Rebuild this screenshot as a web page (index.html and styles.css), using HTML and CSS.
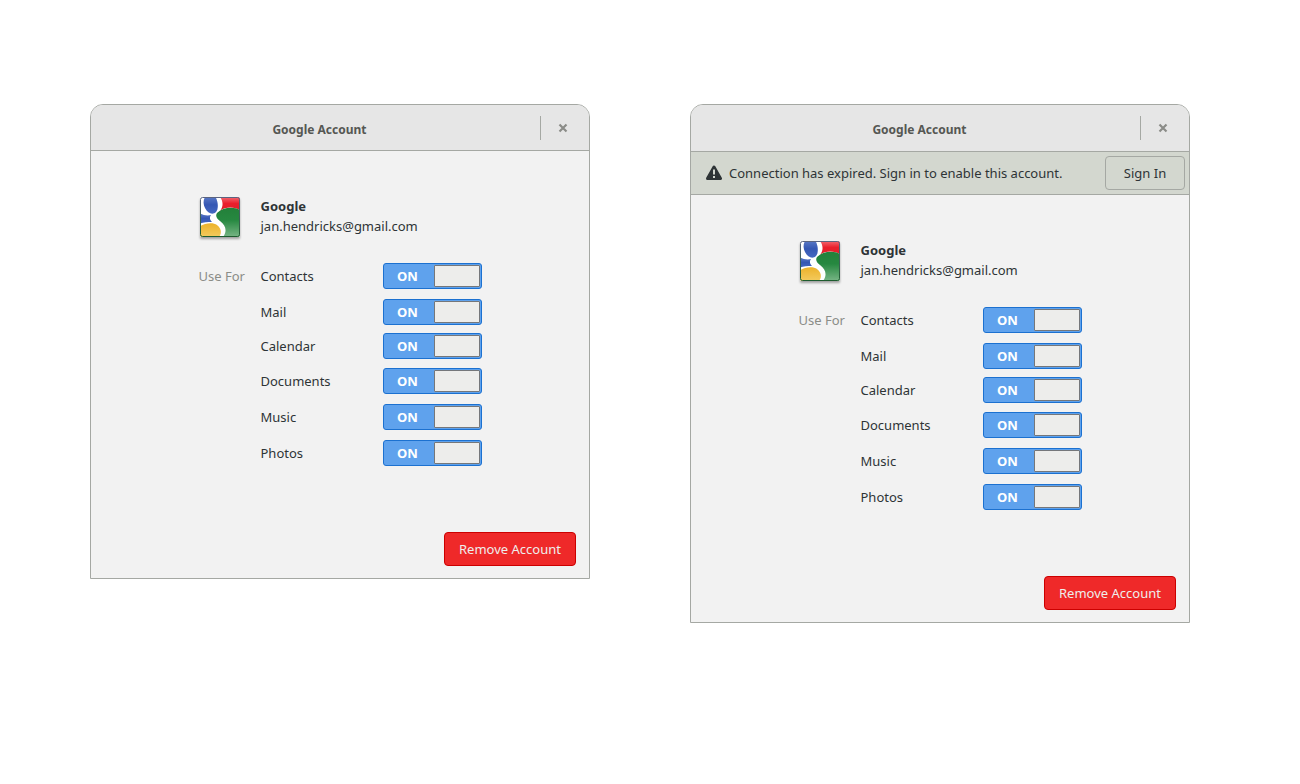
FILE: index.html
```html
<!DOCTYPE html>
<html lang="en">
<head>
<meta charset="utf-8">
<title>Google Account</title>
<link rel="stylesheet" href="styles.css">
</head>
<body>
<svg class="defs" aria-hidden="true">
  <defs>
    <linearGradient id="blue" x1="0" y1="0" x2="0" y2="1"><stop offset="0" stop-color="#5d7cc8"/><stop offset=".5" stop-color="#3557b3"/><stop offset="1" stop-color="#4569c2"/></linearGradient>
    <linearGradient id="red" x1="0" y1="0" x2="0" y2="1"><stop offset="0" stop-color="#f4737b"/><stop offset=".5" stop-color="#ea1f2c"/><stop offset="1" stop-color="#e0202b"/></linearGradient>
    <linearGradient id="green" x1="0" y1="0" x2="0" y2="1"><stop offset="0" stop-color="#23803a"/><stop offset=".4" stop-color="#268840"/><stop offset="1" stop-color="#7db88a"/></linearGradient>
    <linearGradient id="yellow" x1="0" y1="0" x2="0" y2="1"><stop offset="0" stop-color="#ecb22b"/><stop offset="1" stop-color="#f4cd62"/></linearGradient>
    <linearGradient id="edge" x1="0" y1="0" x2="0" y2="1"><stop offset="0" stop-color="#5b6480"/><stop offset="1" stop-color="#1e5c2f"/></linearGradient>
    <clipPath id="tile"><rect x="1" y="1" width="40" height="40" rx="2"/></clipPath>
  </defs>
  <symbol id="google" viewBox="0 0 42 42">
    <g clip-path="url(#tile)">
      <rect width="42" height="42" fill="#fff"/>
      <path d="M20 0H42V15C37 11 27 10 21 15C25 10 24 4 20 0Z" fill="url(#red)"/>
      <path d="M42 15C36 10 24 11 18 17C16 20 18 23 21 25C28 30 28 37 23 42H42Z" fill="url(#green)"/>
      <path d="M7 0H16C19 5 20 12 17 16C14 19 9 18 6 12C4 8 4 3 7 0Z" fill="url(#blue)"/>
      <path d="M0 17C4 19 8 20 12 19C10 22 11 24 13 26C8 26 4 26 0 28Z" fill="url(#blue)"/>
      <path d="M0 31C5 27 14 26 18 29C24 34 22 39 19 42H0Z" fill="url(#yellow)"/>
    </g>
    <rect x="1.500" y="1.500" width="39" height="39" rx="2" fill="none" stroke="url(#edge)"/>
  </symbol>
  <symbol id="close" viewBox="0 0 10 10"><path d="M1.500 1.500L8.500 8.500M8.500 1.500L1.500 8.500" stroke="#8b8c88" stroke-width="2.200" fill="none"/></symbol>
</svg>
<main class="boards">
  <section class="window" aria-labelledby="t1">
    <header class="titlebar"><h1 class="title" id="t1">Google Account</h1><button class="close" aria-label="Close"><svg><use href="#close"/></svg></button></header>
    <div class="content">
      <div class="details">
        <svg class="logo" role="img" aria-label="Google"><use href="#google"/></svg>
        <div class="identity"><strong>Google</strong><span>jan.hendricks@gmail.com</span></div>
      </div>
      <div class="services">
        <span class="caption">Use For</span>
        <label for="a1">Contacts</label><span class="switch"><input type="checkbox" id="a1" checked><span class="state">ON</span></span>
        <label for="a2">Mail</label><span class="switch"><input type="checkbox" id="a2" checked><span class="state">ON</span></span>
        <label for="a3">Calendar</label><span class="switch"><input type="checkbox" id="a3" checked><span class="state">ON</span></span>
        <label for="a4">Documents</label><span class="switch"><input type="checkbox" id="a4" checked><span class="state">ON</span></span>
        <label for="a5">Music</label><span class="switch"><input type="checkbox" id="a5" checked><span class="state">ON</span></span>
        <label for="a6">Photos</label><span class="switch"><input type="checkbox" id="a6" checked><span class="state">ON</span></span>
      </div>
      <button class="button remove">Remove Account</button>
    </div>
  </section>
  <section class="window" aria-labelledby="t2">
    <header class="titlebar"><h1 class="title" id="t2">Google Account</h1><button class="close" aria-label="Close"><svg><use href="#close"/></svg></button></header>
    <div class="infobar">
      <svg class="warning" viewBox="0 0 16 16" aria-hidden="true"><path d="M8 2L14.500 13.500H1.500Z" fill="#2e3436" stroke="#2e3436" stroke-width="3" stroke-linejoin="round"/><path d="M7 4.500H9V9.500H7ZM7 11H9V13H7Z" fill="#d3d7cf"/></svg>
      <p class="message">Connection has expired. Sign in to enable this account.</p>
      <button class="button signin">Sign In</button>
    </div>
    <div class="content">
      <div class="details">
        <svg class="logo" role="img" aria-label="Google"><use href="#google"/></svg>
        <div class="identity"><strong>Google</strong><span>jan.hendricks@gmail.com</span></div>
      </div>
      <div class="services">
        <span class="caption">Use For</span>
        <label for="b1">Contacts</label><span class="switch"><input type="checkbox" id="b1" checked><span class="state">ON</span></span>
        <label for="b2">Mail</label><span class="switch"><input type="checkbox" id="b2" checked><span class="state">ON</span></span>
        <label for="b3">Calendar</label><span class="switch"><input type="checkbox" id="b3" checked><span class="state">ON</span></span>
        <label for="b4">Documents</label><span class="switch"><input type="checkbox" id="b4" checked><span class="state">ON</span></span>
        <label for="b5">Music</label><span class="switch"><input type="checkbox" id="b5" checked><span class="state">ON</span></span>
        <label for="b6">Photos</label><span class="switch"><input type="checkbox" id="b6" checked><span class="state">ON</span></span>
      </div>
      <button class="button remove">Remove Account</button>
    </div>
  </section>
</main>
</body>
</html>
```
FILE: styles.css
```css
*, *::before { box-sizing: border-box; }
body {
  margin: 0;
  background: #fff;
  color: #2e3436;
  font: 13px/20px "Noto Sans", "Open Sans", sans-serif;
}
button { font: inherit; color: inherit; margin: 0; }
.defs { position: absolute; width: 0; height: 0; }
.boards {
  display: grid;
  grid-template-columns: 1fr 1fr;
  align-items: start;
  gap: 100px;
  padding: 104px 110px 104px 90px;
}
.window {
  border: 1px solid #a5a8a3;
  border-radius: 13px 13px 0 0;
  background: #f2f2f2;
  overflow: hidden;
}
.titlebar {
  display: flex;
  align-items: center;
  height: 46px;
  border-bottom: 1px solid #a5a8a3;
  background: #e6e6e6;
}
.title {
  flex: 1;
  margin: 0;
  padding: 4px 0 0 8px;
  color: #555753;
  font-size: 12px;
  line-height: 20px;
  font-weight: 700;
  text-align: center;
}
.close {
  display: grid;
  place-items: center;
  width: 49px;
  height: 24px;
  padding: 0 4px 0 0;
  border: 0;
  border-left: 1px solid #a5a8a3;
  background: none;
}
.close svg { width: 10px; height: 10px; }
.infobar {
  display: flex;
  align-items: center;
  height: 44px;
  padding: 0 4px 0 15px;
  border-top: 1px solid #a5a8a3;
  border-bottom: 1px solid #a5a8a3;
  background: #d3d7cf;
}
.titlebar:has(+ .infobar) { border-bottom-color: transparent; }
.warning { width: 16px; height: 16px; margin-right: 7px; }
.message { flex: 1; margin: 0; }
.button { height: 34px; border: 1px solid; border-radius: 4px; }
.signin { width: 80px; padding: 0; border-color: #a5a8a3; background: #d3d7cf; }
.content {
  display: flex;
  flex-direction: column;
  align-items: center;
  padding: 45px 13px 12px;
}
.details {
  display: grid;
  grid-template-columns: 62px 221px;
}
.logo { width: 42px; height: 42px; filter: drop-shadow(0 2px 1px #0005); }
.identity { display: flex; flex-direction: column; }
.services {
  display: grid;
  grid-template-columns: 62px 122px 99px;
  grid-template-rows: 36px 34px 35px 36px 36px 26px;
  margin-top: 25px;
}
.services label { grid-column: 2; line-height: 26px; }
.caption { color: #8b8d88; line-height: 26px; }
.switch { grid-column: 3; display: grid; height: 26px; }
.switch input {
  grid-area: 1 / 1;
  appearance: none;
  display: flex;
  justify-content: flex-end;
  width: 99px;
  height: 26px;
  margin: 0;
  padding: 1px;
  border: 1px solid #1c71d0;
  border-radius: 3px;
  background: #5fa2ed;
}
.switch input::before {
  content: "";
  width: 46px;
  height: 22px;
  border: 1px solid #75777a;
  border-radius: 1px;
  background: #ededeb;
}
.switch input:not(:checked) { justify-content: flex-start; background: #ccc; }
.state {
  grid-area: 1 / 1;
  z-index: 1;
  width: 50px;
  color: #fff;
  font-weight: 700;
  line-height: 26px;
  text-align: center;
  pointer-events: none;
}
.switch input:not(:checked) + .state { visibility: hidden; }
.remove {
  align-self: flex-end;
  width: 132px;
  margin-top: 66px;
  padding: 0;
  border-color: #cc0000;
  background: #ef2929;
  color: #eeeeec;
}
```
